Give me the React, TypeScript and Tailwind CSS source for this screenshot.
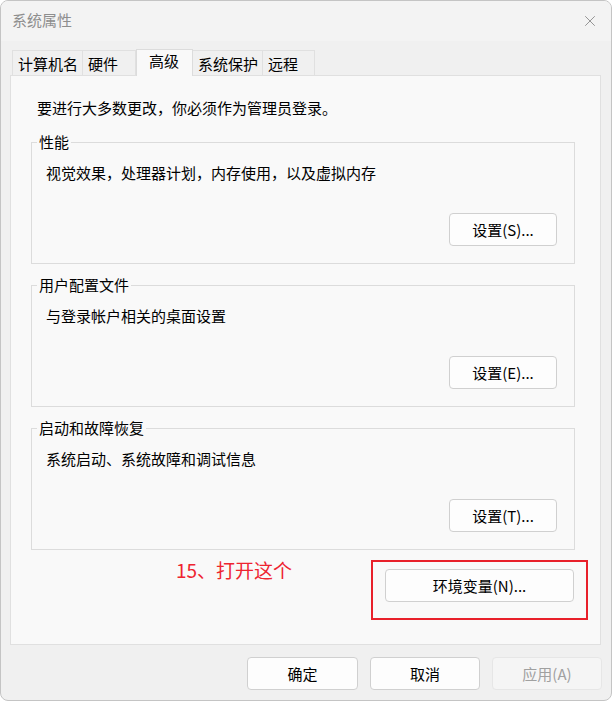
import { X } from 'lucide-react'

const font = { fontFamily: '"Noto Sans CJK SC", "Noto Sans", sans-serif' }

const tabs = [
  { label: '计算机名', w: 'w-[71px]' },
  { label: '硬件', w: 'w-[53px]' },
  { label: '高级', w: 'w-[57px]', active: true },
  { label: '系统保护', w: 'w-[70px]' },
  { label: '远程', w: 'w-[52px]' },
]

function Group({ title, desc, button }: { title: string; desc: string; button: string }) {
  return (
    <div className="relative ml-[20px] mr-[25px] h-[122px] border border-[#dcdcdc] flex flex-col">
      <span className="absolute -top-[11px] left-[5px] px-[2px] bg-[#f9f9f9] leading-[20px]">{title}</span>
      <div className="pt-[20px] pl-[14px] leading-[20px]">{desc}</div>
      <button className="self-end mt-[30px] mr-[17px] w-[108px] h-[33px] rounded-[4px] border border-[#d0d0d0] bg-[#fdfdfd] leading-none">
        {button}
      </button>
    </div>
  )
}

export default function App() {
  return (
    <div className="w-[613px] h-[702px] bg-white text-[15px] text-black" style={font}>
      <div className="w-[612px] h-[701px] border border-[#c4c4c4] rounded-[8px] bg-[#f0f0f0] flex flex-col overflow-hidden">
        {/* Title bar */}
        <div className="h-[40px] flex items-start justify-between pt-[11px] pl-[11px] pr-[12px] bg-[#f3f3f3]">
          <span className="text-[#8e8e8e] leading-[16px]">系统属性</span>
          <X className="h-[18px] w-[18px] text-[#8a8a8a]" strokeWidth={1.2} />
        </div>

        {/* Tabs */}
        <div className="h-[34px] flex items-end pl-[11px] relative z-10">
          {tabs.map((t) =>
            t.active ? (
              <div
                key={t.label}
                className={`${t.w} h-[27px] -mb-px border border-b-0 border-[#dcdcdc] bg-[#f9f9f9] pl-[12px] leading-[22px]`}
              >
                {t.label}
              </div>
            ) : (
              <div
                key={t.label}
                className={`${t.w} h-[25px] border border-l-0 first:border-l border-b-0 border-[#e0e0e0] bg-[#f0f0f0] pl-[5px] pt-[1px] leading-[24px]`}
              >
                {t.label}
              </div>
            )
          )}
        </div>

        {/* Panel */}
        <div className="ml-[9px] mr-[10px] h-[570px] border border-[#e0e0e0] bg-[#f9f9f9] flex flex-col">
          <div className="pt-[22px] pl-[26px] leading-[20px]">要进行大多数更改，你必须作为管理员登录。</div>
          <div className="mt-[24px] flex flex-col gap-[21px]">
            <Group title="性能" desc="视觉效果，处理器计划，内存使用，以及虚拟内存" button="设置(S)..." />
            <Group title="用户配置文件" desc="与登录帐户相关的桌面设置" button="设置(E)..." />
            <Group title="启动和故障恢复" desc="系统启动、系统故障和调试信息" button="设置(T)..." />
          </div>
          <div className="mt-[10px] flex items-start justify-between">
            <span className="ml-[165px] mt-[-3px] text-[19px] leading-[26px] text-[#ee2430]">15、打开这个</span>
            <div className="mr-[12px] w-[217px] h-[60px] border-2 border-[#e8202a] pl-[12px] pt-[7px]">
              <button className="w-[189px] h-[33px] rounded-[4px] border border-[#d0d0d0] bg-[#fdfdfd] leading-none">
                环境变量(N)...
              </button>
            </div>
          </div>
        </div>

        {/* Dialog buttons */}
        <div className="mt-[12px] mr-[9px] flex justify-end gap-[12px]">
          <button className="w-[111px] h-[33px] rounded-[4px] border border-[#d0d0d0] bg-[#fdfdfd] leading-none">确定</button>
          <button className="w-[110px] h-[33px] rounded-[4px] border border-[#d0d0d0] bg-[#fdfdfd] leading-none">取消</button>
          <button className="w-[110px] h-[33px] rounded-[4px] border border-[#e6e6e6] bg-[#f5f5f5] text-[#a0a0a0] leading-none">
            应用(A)
          </button>
        </div>
      </div>
    </div>
  )
}
